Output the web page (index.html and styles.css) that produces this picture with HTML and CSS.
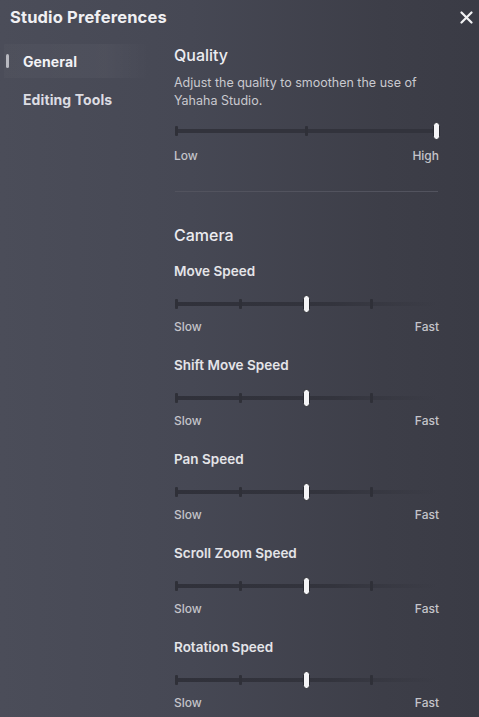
FILE: index.html
```html
<!DOCTYPE html>
<html>
<head>
<meta charset="utf-8">
<link rel="stylesheet" href="styles.css">
</head>
<body>
<div class="window">
  <header class="header">
    <h1 class="title">Studio Preferences</h1>
    <button class="close" aria-label="Close">
      <svg width="13" height="13" viewBox="0 0 13 13"><path d="M1.5 1.5 L11.5 11.5 M11.5 1.5 L1.5 11.5" stroke="#f2f2f4" stroke-width="2.2" stroke-linecap="round"/></svg>
    </button>
  </header>
  <div class="body">
    <nav class="sidebar">
      <div class="nav-item active"><span class="indicator"></span>General</div>
      <div class="nav-item">Editing Tools</div>
    </nav>
    <main class="content">
      <section class="quality">
        <h2 class="heading">Quality</h2>
        <p class="desc">Adjust the quality to smoothen the use of Yahaha Studio.</p>
        <div class="slider">
          <div class="track"></div>
          <span class="tick t0"></span><span class="tick t50"></span>
          <span class="thumb t100"></span>
        </div>
        <div class="range-labels q"><span>Low</span><span>High</span></div>
      </section>
      <hr class="divider">
      <section class="camera">
        <h2 class="heading">Camera</h2>
        <div class="setting">
          <div class="label">Move Speed</div>
          <div class="slider"><div class="track"></div><span class="tick t0"></span><span class="tick t25"></span><span class="tick t75"></span><span class="thumb t50"></span></div>
          <div class="range-labels"><span>Slow</span><span>Fast</span></div>
        </div>
        <div class="setting">
          <div class="label">Shift Move Speed</div>
          <div class="slider"><div class="track"></div><span class="tick t0"></span><span class="tick t25"></span><span class="tick t75"></span><span class="thumb t50"></span></div>
          <div class="range-labels"><span>Slow</span><span>Fast</span></div>
        </div>
        <div class="setting">
          <div class="label">Pan Speed</div>
          <div class="slider"><div class="track"></div><span class="tick t0"></span><span class="tick t25"></span><span class="tick t75"></span><span class="thumb t50"></span></div>
          <div class="range-labels"><span>Slow</span><span>Fast</span></div>
        </div>
        <div class="setting">
          <div class="label">Scroll Zoom Speed</div>
          <div class="slider"><div class="track"></div><span class="tick t0"></span><span class="tick t25"></span><span class="tick t75"></span><span class="thumb t50"></span></div>
          <div class="range-labels"><span>Slow</span><span>Fast</span></div>
        </div>
        <div class="setting">
          <div class="label">Rotation Speed</div>
          <div class="slider"><div class="track"></div><span class="tick t0"></span><span class="tick t25"></span><span class="tick t75"></span><span class="thumb t50"></span></div>
          <div class="range-labels"><span>Slow</span><span>Fast</span></div>
        </div>
      </section>
    </main>
  </div>
</div>
</body>
</html>
```
FILE: styles.css
```css
* { box-sizing: border-box; }
html, body { margin: 0; padding: 0; }
body {
  width: 479px;
  height: 717px;
  overflow: hidden;
  font-family: Inter, "Noto Sans", "Liberation Sans", sans-serif;
  background: linear-gradient(to right, #4b4d59 0%, #464854 40%, #3d3e48 80%, #3a3b45 100%);
  color: #e6e6ea;
}
.window { display: flex; flex-direction: column; height: 717px; }
.header {
  height: 34px;
  display: flex;
  align-items: center;
  justify-content: space-between;
  padding: 0 5px 0 10px;
}
.title {
  margin: 0;
  font-size: 16.5px;
  font-weight: 700;
  color: #f0f0f3;
  letter-spacing: 0.15px;
}
.close {
  background: none;
  border: 0;
  padding: 0;
  width: 16px;
  height: 16px;
  display: flex;
  align-items: center;
  justify-content: center;
}
.body { display: flex; flex: 1; }
.sidebar {
  width: 174px;
  flex: none;
  padding-top: 10px;
  display: flex;
  flex-direction: column;
  gap: 4px;
}
.nav-item {
  position: relative;
  height: 34px;
  margin-left: 4px;
  width: 146px;
  padding-left: 19px;
  display: flex;
  align-items: center;
  font-size: 14px;
  font-weight: 700;
  letter-spacing: 0.1px;
  color: #dcdce2;
}
.nav-item.active {
  color: #f2f2f5;
  background: linear-gradient(to right, rgba(255,255,255,0.018), rgba(255,255,255,0.03) 70%, rgba(255,255,255,0));
}
.indicator {
  position: absolute;
  left: 2px;
  top: 10px;
  width: 3px;
  height: 14px;
  border-radius: 2px;
  background: #b8b9c0;
}
.content {
  width: 264px;
  padding-top: 10px;
}
.heading {
  margin: 0;
  font-size: 16px;
  line-height: 22px;
  font-weight: 500;
  color: #ececf0;
}
.desc {
  margin: 8px 0 0;
  font-size: 12.5px;
  line-height: 18px;
  color: #c9c9cf;
  width: 266px;
}
.slider {
  position: relative;
  height: 20px;
  width: 262px;
  margin-left: 1px;
}
.quality .slider { margin-top: 11px; }
.track {
  position: absolute;
  left: 0;
  right: 0;
  top: 8px;
  height: 4px;
  border-radius: 2px;
  background: linear-gradient(to right, #30313a 0%, #33343d 60%, rgba(52,53,62,0.6) 80%, rgba(52,53,62,0) 100%);
}
.quality .track { background: #32333c; }
.tick {
  position: absolute;
  top: 5px;
  width: 3px;
  height: 10px;
  margin-left: -1.5px;
  border-radius: 1px;
  background: #2f3038;
}
.thumb {
  position: absolute;
  top: 1px;
  width: 7px;
  height: 18px;
  margin-left: -3.5px;
  border-radius: 4px;
  background: #f4f4f6;
  border: 1px solid #2a2b32;
}
.t0 { left: 1px; }
.t25 { left: 25%; }
.t50 { left: 50%; }
.t75 { left: 75%; }
.t100 { left: calc(100% - 1px); }
.range-labels {
  display: flex;
  justify-content: space-between;
  font-size: 12px;
  line-height: 16px;
  font-weight: 500;
  color: #c4c4ca;
  margin-top: 5px;
  width: 265px;
}
.range-labels.q { margin-top: 7px; }
.divider {
  margin: 27px 0 0 1px;
  width: 263px;
  border: 0;
  height: 1px;
  background: #52535e;
}
.camera { margin-top: 32px; }
.setting { margin-top: 16px; }
.setting + .setting { margin-top: 21px; }
.label {
  font-size: 13.5px;
  line-height: 18px;
  font-weight: 600;
  color: #e4e4e8;
  margin-bottom: 14px;
}
```
